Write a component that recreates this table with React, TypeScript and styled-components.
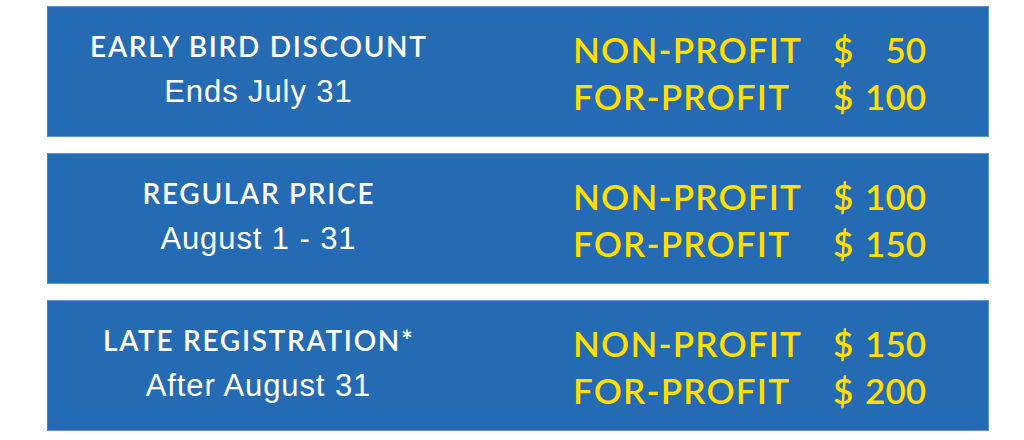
import styled, { createGlobalStyle } from 'styled-components';

const GlobalStyle = createGlobalStyle`
    html, body {
        margin: 0;
        padding: 0;
        background: #ffffff;
    }
`;

const tiers = [
    { title: 'EARLY BIRD DISCOUNT', when: 'Ends July 31', nonProfit: '50', forProfit: '100' },
    { title: 'REGULAR PRICE', when: 'August 1 - 31', nonProfit: '100', forProfit: '150' },
    { title: 'LATE REGISTRATION*', when: 'After August 31', nonProfit: '150', forProfit: '200' },
];

const Page = styled.div`
    width: 942px;
    padding: 6px 0 10px 47px;
    display: flex;
    flex-direction: column;
    gap: 16px;
`;

const Panel = styled.section`
    box-sizing: border-box;
    height: 131px;
    display: grid;
    grid-template-columns: 420px 1fr;
    background-color: #256bb3;
    border: 1px solid #5d93d2;
    border-left-color: #4a84c6;
`;

const Info = styled.div`
    padding-top: 22px;
    display: flex;
    flex-direction: column;
    align-items: center;
    color: #ffffff;
`;

const Title = styled.div`
    font-family: Lato, "Noto Sans", sans-serif;
    font-weight: 600;
    font-size: 28px;
    line-height: 34px;
    letter-spacing: 1.7px;
    margin-right: -1.7px;
`;

const When = styled.div`
    margin-top: 12px;
    font-family: "Liberation Sans", Arial, sans-serif;
    font-size: 31px;
    line-height: 34px;
    letter-spacing: 0.9px;
    margin-right: -0.9px;
`;

const Prices = styled.div`
    padding: 19px 0 0 105px;
    display: grid;
    grid-template-columns: 260px 93px;
    grid-auto-rows: 47px;
    color: #ffde00;
    font-family: Lato, "Noto Sans", sans-serif;
    font-weight: 600;
    font-size: 35px;
    line-height: 47px;
`;

const Label = styled.div`
    white-space: nowrap;
    letter-spacing: 1.2px;
`;

const Amount = styled.div`
    display: flex;
    justify-content: space-between;
`;

export default () => {
    return (
        <>
            <GlobalStyle />
            <Page>
                {tiers.map((t) => (
                    <Panel key={t.title}>
                        <Info>
                            <Title>{t.title}</Title>
                            <When>{t.when}</When>
                        </Info>
                        <Prices>
                            <Label>NON-PROFIT</Label>
                            <Amount><span>$</span><span>{t.nonProfit}</span></Amount>
                            <Label>FOR-PROFIT</Label>
                            <Amount><span>$</span><span>{t.forProfit}</span></Amount>
                        </Prices>
                    </Panel>
                ))}
            </Page>
        </>
    )
}
